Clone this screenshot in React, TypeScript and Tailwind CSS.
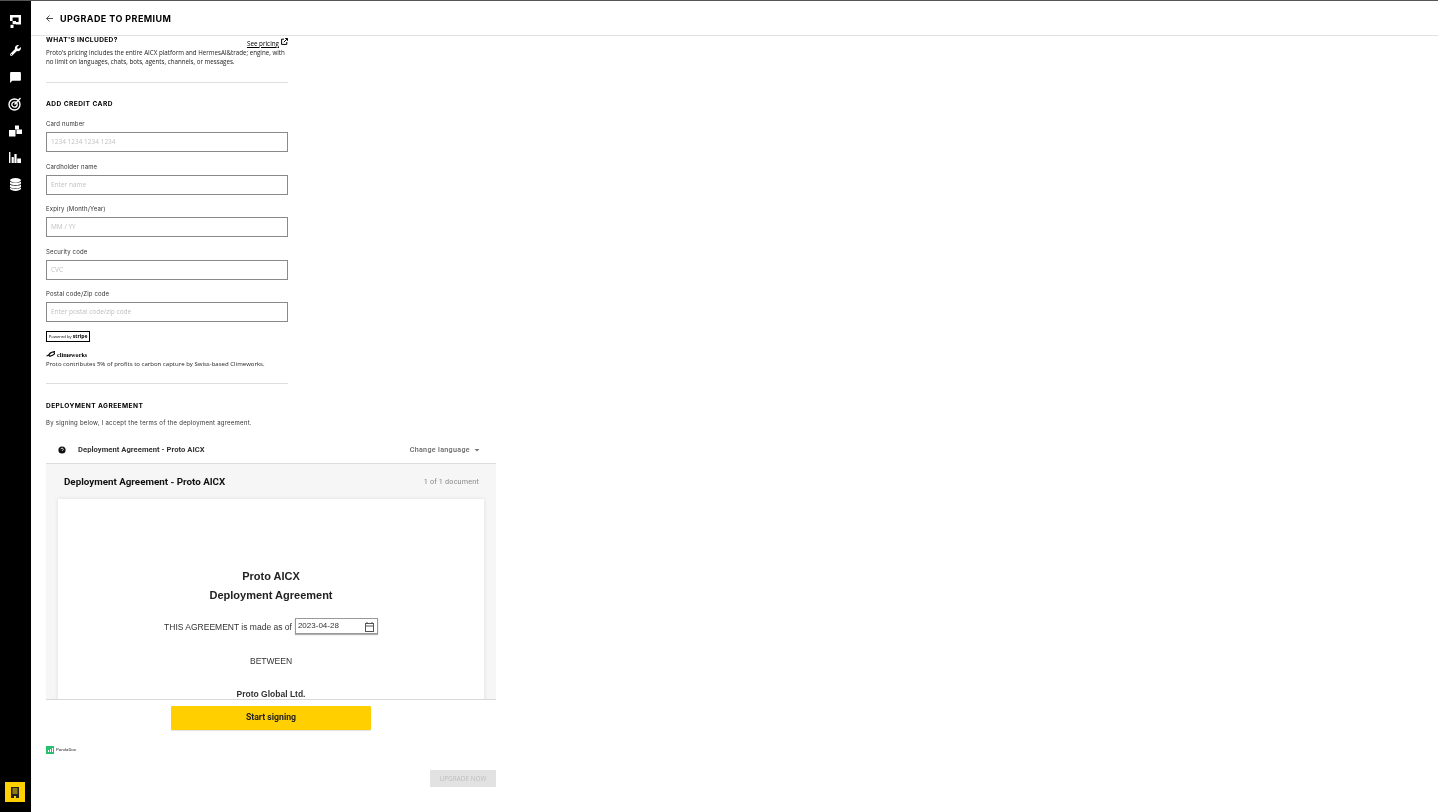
import React from "react";
import { FaWrench } from "react-icons/fa";
import { MdChatBubble, MdArrowDropDown } from "react-icons/md";

const Logo = () => (
  <svg width="11" height="13" viewBox="0 0 11 13" fill="#fff">
    <path d="M0 0h11v9.5H6V7h2.6V2.6H2.6V6H0z" />
    <rect x="2.6" y="6" width="3.4" height="3.2" />
    <rect x="0.5" y="9.8" width="3" height="3.2" />
  </svg>
);
const Target = () => (
  <svg width="14" height="14" viewBox="0 0 14 14" fill="none" stroke="#fff">
    <circle cx="6.5" cy="7.5" r="5.5" strokeWidth="1.4" />
    <circle cx="6.5" cy="7.5" r="2.7" strokeWidth="1.3" />
    <path d="M6.5 7.5l6-6.5" strokeWidth="1.3" />
  </svg>
);
const Blocks = () => (
  <svg width="13" height="12" viewBox="0 0 13 12" fill="#fff">
    <rect x="0" y="5" width="6.5" height="6.5" />
    <rect x="6" y="0.5" width="4" height="4" />
    <rect x="7.5" y="4.5" width="5.5" height="4.5" />
  </svg>
);
const Bars = () => (
  <svg width="12" height="11" viewBox="0 0 12 11" fill="#fff">
    <rect x="0" y="0" width="1.4" height="11" />
    <rect x="2.6" y="5" width="2.2" height="6" />
    <rect x="5.4" y="2" width="2.2" height="9" />
    <rect x="8.2" y="6.5" width="3.8" height="4.5" />
  </svg>
);
const Db = () => (
  <svg width="11" height="13" viewBox="0 0 11 13" fill="#fff">
    <ellipse cx="5.5" cy="2.2" rx="5.5" ry="2.2" />
    <path d="M0 3.4c1 1.6 10 1.6 11 0v2.2c-1 2-10 2-11 0z" />
    <path d="M0 6.5c1 1.6 10 1.6 11 0v2.2c-1 2-10 2-11 0z" />
    <path d="M0 9.6c1 1.6 10 1.6 11 0v1.2c-1 2.8-10 2.8-11 0z" />
  </svg>
);
const Building = () => (
  <svg width="8" height="11" viewBox="0 0 8 11" fill="#222">
    <path d="M0 0h8v11H5V9H3v2H0z" />
    <rect x="1.5" y="1.5" width="5" height="1" fill="#ffcf00" />
    <rect x="1.5" y="3.5" width="5" height="1" fill="#ffcf00" />
    <rect x="1.5" y="5.5" width="5" height="1" fill="#ffcf00" />
  </svg>
);
const External = () => (
  <svg width="7" height="7" viewBox="0 0 7 7" fill="none" stroke="#000" strokeWidth="1">
    <path d="M3 1.2H.6v5.2h5.2V4M2.8 4.2L6.4.7M4.2.5h2.3v2.3" />
  </svg>
);
const Climeworks = () => (
  <svg width="10" height="7" viewBox="0 0 10 7" fill="none" stroke="#000" strokeWidth="1.2">
    <path d="M0.5 5C3 5 4 1 7 1c2 0 2 2 0 3S3 6 3 4s3-3 6-3.5" />
  </svg>
);

const heading = "font-['Inter','Liberation_Sans',sans-serif] font-bold text-black";
const label = "font-['Inter','Liberation_Sans',sans-serif] text-[6px] leading-[9px] text-[#333] tracking-[0.15px]";
const body = "font-['Open_Sans',sans-serif] text-[6.2px] leading-[9px] text-[#222]";

const Field = ({ title, hint, mt }: { title: string; hint: string; mt: string }) => (
  <div className={mt}>
    <div className={label}>{title}</div>
    <div className="mt-[4px] flex h-[20px] items-center border border-[#8a8a8a] bg-white pl-[4px]">
      <span className="font-['Open_Sans',sans-serif] text-[6.5px] text-[#c0c0c0]">{hint}</span>
    </div>
  </div>
);

export default function App() {
  const side = [
    <FaWrench key="w" size={11} color="#fff" />,
    <MdChatBubble key="c" size={13} color="#fff" />,
    <Target key="t" />,
    <Blocks key="b" />,
    <Bars key="g" />,
    <Db key="d" />,
  ];
  return (
    <div className="flex h-[812px] w-[1438px] overflow-hidden border-t border-[#555] bg-white blur-[0.25px]">
      <aside className="flex w-[31px] shrink-0 flex-col items-center bg-black pr-[1px]">
        <div className="mt-[13px] flex h-[14px] items-center justify-center"><Logo /></div>
        <div className="mt-[9px] flex w-full flex-col items-center">
          {side.map((icon, i) => (
            <div key={i} className="flex h-[26.8px] w-full items-center justify-center">{icon}</div>
          ))}
        </div>
        <div className="mt-auto mb-[10px] flex h-[20px] w-[20px] items-center justify-center bg-[#ffcf00]">
          <Building />
        </div>
      </aside>

      <main className="flex min-w-0 flex-1 flex-col">
        <header className="flex h-[35px] shrink-0 items-center border-b border-[#e2e2e2] pl-[15px]">
          <svg width="7" height="7" viewBox="0 0 7 7" fill="none" stroke="#222" strokeWidth="0.8">
            <path d="M3.5.5L.6 3.5l2.9 3M.6 3.5H7" />
          </svg>
          <h1 className={`${heading} ml-[7px] pt-[1px] text-[9px] tracking-[0.42px]`}>UPGRADE TO PREMIUM</h1>
        </header>

        <div className="pl-[15px]">
          <section className="w-[242px]">
            <div className="flex items-start justify-between">
              <h2 className={`${heading} text-[6.6px] leading-[9px] tracking-[0.35px]`}>WHAT'S INCLUDED?</h2>
              <div className="flex items-start gap-[2px] pt-[2px]">
                <span className="mt-[1px] font-['Open_Sans',sans-serif] text-[6.3px] leading-[9px] text-black underline">See pricing</span>
                <External />
              </div>
            </div>
            <p className={`${body} w-[244px]`}>
              Proto's pricing includes the entire AICX platform and HermesAI&amp;trade; engine, with no limit on languages, chats, bots, agents, channels, or messages.
            </p>
            <div className="mt-[16px] h-px bg-[#dedede]" />

            <h2 className={`${heading} mt-[17px] text-[6.6px] leading-[9px] tracking-[0.42px]`}>ADD CREDIT CARD</h2>
            <Field mt="mt-[10px]" title="Card number" hint="1234 1234 1234 1234" />
            <Field mt="mt-[9.5px]" title="Cardholder name" hint="Enter name" />
            <Field mt="mt-[9.5px]" title="Expiry (Month/Year)" hint="MM / YY" />
            <Field mt="mt-[9.5px]" title="Security code" hint="CVC" />
            <Field mt="mt-[9.5px]" title="Postal code/Zip code" hint="Enter postal code/zip code" />

            <div className="mt-[9px] flex h-[11px] w-[44px] items-center justify-center border border-black bg-white">
              <span className="font-['Open_Sans',sans-serif] text-[4.2px] text-black">Powered by <b className="text-[5px]">stripe</b></span>
            </div>
            <div className="mt-[9px] flex h-[7px] items-center gap-[1px]">
              <Climeworks />
              <span className="font-['Liberation_Serif',serif] text-[6.2px] font-bold text-black">climeworks</span>
            </div>
            <p className={`${body} mt-[2px] whitespace-nowrap text-[6.05px]!`}>Proto contributes 5% of profits to carbon capture by Swiss-based Climeworks.</p>
            <div className="mt-[14px] h-px bg-[#dedede]" />

            <h2 className={`${heading} mt-[18px] text-[6.6px] leading-[9px] tracking-[0.42px]`}>DEPLOYMENT AGREEMENT</h2>
            <p className={`${label} mt-[7px] w-[260px] whitespace-nowrap tracking-[0.25px]!`}>By signing below, I accept the terms of the deployment agreement.</p>
          </section>

          <section className="mt-[10px] w-[450px]">
            <div className="flex h-[27px] items-center justify-between border-b border-[#dcdcdc] pl-[12px] pr-[13px]">
              <div className="flex items-center">
                <svg width="8" height="8" viewBox="0 0 8 8"><circle cx="4" cy="4" r="3.6" fill="#111" /><path d="M2.6 3.2c.3-1.4 2.8-1.3 2.8 0 0 1-1.4 1-1.4 1.8" stroke="#fff" strokeWidth=".8" fill="none" /></svg>
                <span className="ml-[12px] font-['Roboto',sans-serif] text-[7.6px] font-bold tracking-[0.05px] text-[#333]">Deployment Agreement - Proto AICX</span>
              </div>
              <div className="flex items-center">
                <span className="font-['Roboto',sans-serif] text-[7.2px] font-medium tracking-[0.3px] text-[#666]">Change language</span>
                <MdArrowDropDown size={12} color="#777" className="ml-[1px]" />
              </div>
            </div>
            <div className="h-[236px] overflow-hidden border-b border-[#d8d8d8] bg-[#f6f6f6]">
              <div className="flex h-[35px] items-center justify-between pl-[18px] pr-[17px] pt-[2px]">
                <span className="font-['Roboto',sans-serif] text-[9.8px] font-bold text-[#111]">Deployment Agreement - Proto AICX</span>
                <span className="font-['Roboto',sans-serif] text-[7.2px] tracking-[0.2px] text-[#888]">1 of 1 document</span>
              </div>
              <div className="ml-[12px] h-[300px] w-[426px] bg-white pt-[70px] text-center font-['Liberation_Sans',sans-serif] shadow-[0_0_4px_rgba(0,0,0,0.1)] blur-[0.6px]">
                <div className="text-[11px] font-bold leading-[14px] text-[#222]">Proto AICX</div>
                <div className="mt-[5px] text-[11px] font-bold leading-[14px] text-[#222]">Deployment Agreement</div>
                <div className="mt-[16px] flex items-center justify-center text-[8.5px] text-[#333]">
                  <span className="mt-[3px]">THIS AGREEMENT is made as of</span>
                  <div className="ml-[3px] flex h-[16px] w-[83px] items-start justify-between border border-[#999] pl-[2px] pr-[3px] pt-[1px] text-[8px] shadow-[0_1px_1px_rgba(0,0,0,0.3)]">
                    <span>2023-04-28</span>
                    <svg width="9" height="10" viewBox="0 0 9 10" fill="none" stroke="#555" className="mt-[2px]"><rect x=".5" y="1.5" width="8" height="8" /><path d="M0 4h9M2 0v2M7 0v2" /></svg>
                  </div>
                </div>
                <div className="mt-[22px] text-[8.5px] leading-[10px] text-[#333]">BETWEEN</div>
                <div className="mt-[23px] text-[8.5px] font-bold leading-[10px] text-[#333]">Proto Global Ltd.</div>
              </div>
            </div>
            <div className="mt-[6px] flex justify-center">
              <button className="flex h-[24px] w-[200px] items-center justify-center rounded-[1px] bg-[#ffcf00] font-['Roboto',sans-serif] text-[8.7px] font-bold text-[#222] shadow-[0_1px_1px_rgba(0,0,0,0.12)]">Start signing</button>
            </div>
            <div className="mt-[16px] flex h-[8px] items-center">
              <div className="flex h-[8px] w-[8px] items-end justify-center gap-[1px] bg-[#25c16f] pb-[2px]">
                <span className="h-[2px] w-[1px] bg-white" /><span className="h-[3px] w-[1px] bg-white" /><span className="h-[4px] w-[1px] bg-white" />
              </div>
              <span className="ml-[2px] font-['Roboto',sans-serif] text-[4.4px] text-[#333]">PandaDoc</span>
            </div>
            <div className="mt-[16px] flex justify-end">
              <button className="flex h-[17px] w-[66px] items-center justify-center bg-[#e2e2e2] font-['Open_Sans',sans-serif] text-[6.3px] tracking-[0.1px] text-[#bdbdbd]">UPGRADE NOW</button>
            </div>
          </section>
        </div>
      </main>
    </div>
  );
}
